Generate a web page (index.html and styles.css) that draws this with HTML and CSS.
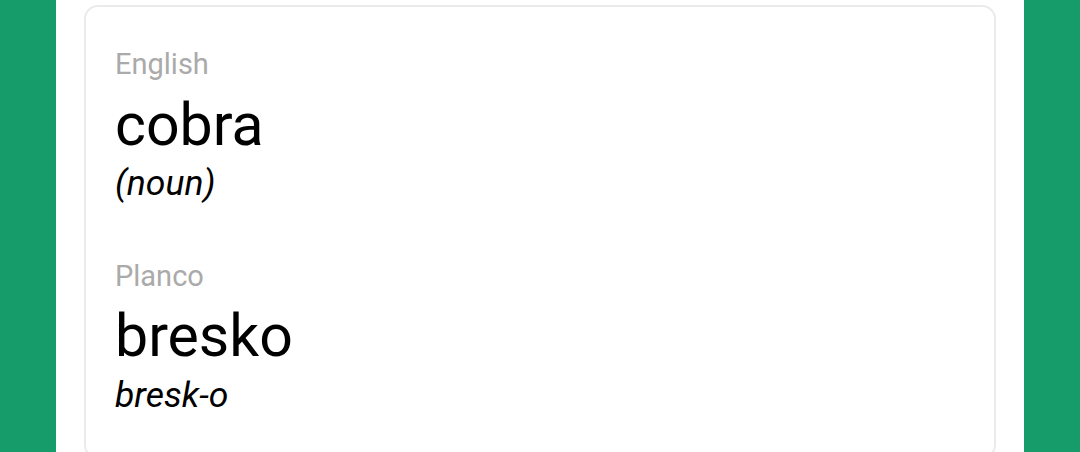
FILE: index.html
```html
<!DOCTYPE html>
<html lang="en">
<head>
<meta charset="utf-8">
<title>Dictionary entry</title>
<link rel="stylesheet" href="styles.css">
</head>
<body>
<main class="page">
  <section class="card">
    <div class="entry">
      <div class="label">English</div>
      <div class="word">cobra</div>
      <div class="note">(noun)</div>
    </div>
    <div class="entry entry-second">
      <div class="label">Planco</div>
      <div class="word">bresko</div>
      <div class="note">bresk-o</div>
    </div>
  </section>
</main>
</body>
</html>
```
FILE: styles.css
```css
html, body {
  margin: 0;
  padding: 0;
  height: 100%;
}
body {
  background: #169b6b;
  font-family: Roboto, "Liberation Sans", sans-serif;
  overflow: hidden;
}
.page {
  width: 912px;
  margin: 0 auto;
  background: #ffffff;
  padding: 5px 28px 0;
  min-height: 100%;
  box-sizing: content-box;
}
.card {
  border: 2px solid #ebebeb;
  border-radius: 14px;
  padding: 40px 29px 20px;
  height: 390px;
}
.entry {
  display: flex;
  flex-direction: column;
}
.entry-second {
  margin-top: 56px;
}
.label {
  font-size: 29px;
  line-height: 34px;
  color: #aaaaaa;
}
.word {
  font-size: 59px;
  line-height: 70px;
  color: #000;
  margin-top: 9px;
}
.entry-second .word {
  margin-top: 8px;
}
.note {
  font-size: 35.5px;
  line-height: 40px;
  font-style: italic;
  color: #000;
  margin-top: 3px;
}
.entry-second .note {
  margin-top: 4px;
}
```
